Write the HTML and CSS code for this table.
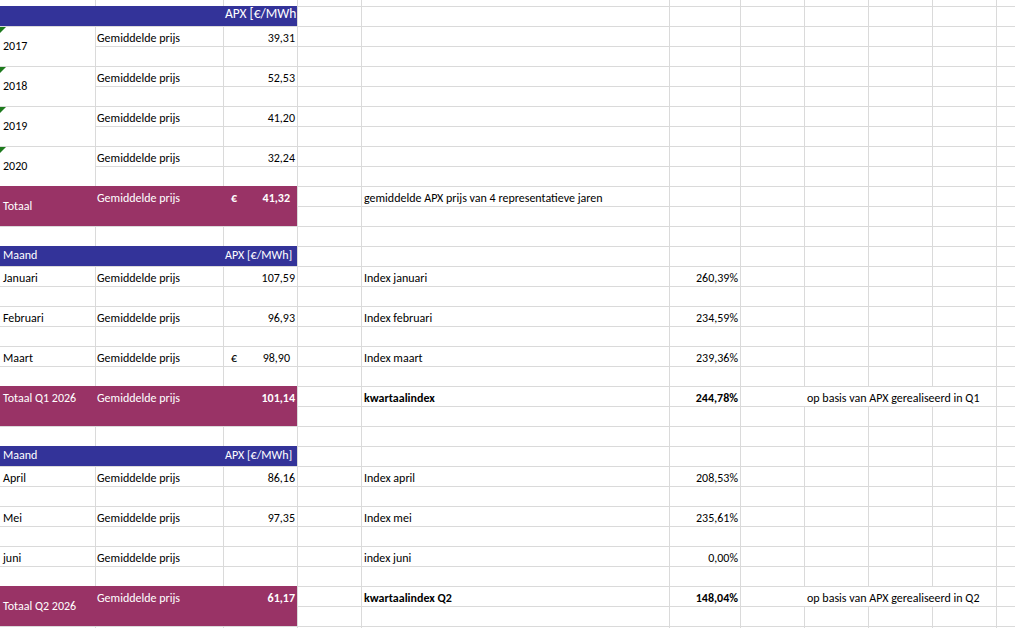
FILE: index.html
```html
<!DOCTYPE html>
<html lang="nl">
<head>
<meta charset="utf-8">
<title>APX prijzen</title>
<link rel="stylesheet" href="styles.css">
</head>
<body>
<div class="sheet">
  <div class="lead"></div>

  <div class="grp">
    <div class="cell ca hdr"></div>
    <div class="cell cb hdr"></div>
    <div class="cell cc hdr big">APX [€/MWh]</div>
  </div>

  <div class="grp two">
    <div class="cell ca tall merged flag">2017</div>
    <div class="cell cb">Gemiddelde prijs</div>
    <div class="cell cc num">39,31</div>
  </div>
  <div class="grp two">
    <div class="cell ca tall merged flag">2018</div>
    <div class="cell cb">Gemiddelde prijs</div>
    <div class="cell cc num">52,53</div>
  </div>
  <div class="grp two">
    <div class="cell ca tall merged flag">2019</div>
    <div class="cell cb">Gemiddelde prijs</div>
    <div class="cell cc num">41,20</div>
  </div>
  <div class="grp two">
    <div class="cell ca tall merged flag">2020</div>
    <div class="cell cb">Gemiddelde prijs</div>
    <div class="cell cc num">32,24</div>
  </div>

  <div class="grp two">
    <div class="cell ca tall tot">Totaal</div>
    <div class="cell cb span tot">Gemiddelde prijs</div>
    <div class="cell cc span tot acct bold"><span>€</span><span>41,32</span></div>
    <div class="cell ce">gemiddelde APX prijs van 4 representatieve jaren</div>
  </div>

  <div class="grp"></div>

  <div class="grp">
    <div class="cell ca hdr">Maand</div>
    <div class="cell cb hdr"></div>
    <div class="cell cc hdr hnum">APX [€/MWh]</div>
  </div>

  <div class="grp two">
    <div class="cell ca">Januari</div>
    <div class="cell cb">Gemiddelde prijs</div>
    <div class="cell cc num">107,59</div>
    <div class="cell ce">Index januari</div>
    <div class="cell cf num">260,39%</div>
  </div>
  <div class="grp two">
    <div class="cell ca">Februari</div>
    <div class="cell cb">Gemiddelde prijs</div>
    <div class="cell cc num">96,93</div>
    <div class="cell ce">Index februari</div>
    <div class="cell cf num">234,59%</div>
  </div>
  <div class="grp two">
    <div class="cell ca">Maart</div>
    <div class="cell cb">Gemiddelde prijs</div>
    <div class="cell cc acct"><span>€</span><span>98,90</span></div>
    <div class="cell ce">Index maart</div>
    <div class="cell cf num">239,36%</div>
  </div>

  <div class="grp two">
    <div class="cell ca span tot">Totaal Q1 2026</div>
    <div class="cell cb span tot">Gemiddelde prijs</div>
    <div class="cell cc span tot num bold">101,14</div>
    <div class="cell ce bold">kwartaalindex</div>
    <div class="cell cf num bold">244,78%</div>
    <div class="cell ch over">op basis van APX gerealiseerd in Q1</div>
  </div>

  <div class="grp"></div>

  <div class="grp">
    <div class="cell ca hdr">Maand</div>
    <div class="cell cb hdr"></div>
    <div class="cell cc hdr hnum">APX [€/MWh]</div>
  </div>

  <div class="grp two">
    <div class="cell ca">April</div>
    <div class="cell cb">Gemiddelde prijs</div>
    <div class="cell cc num">86,16</div>
    <div class="cell ce">Index april</div>
    <div class="cell cf num">208,53%</div>
  </div>
  <div class="grp two">
    <div class="cell ca">Mei</div>
    <div class="cell cb">Gemiddelde prijs</div>
    <div class="cell cc num">97,35</div>
    <div class="cell ce">Index mei</div>
    <div class="cell cf num">235,61%</div>
  </div>
  <div class="grp two">
    <div class="cell ca">juni</div>
    <div class="cell cb">Gemiddelde prijs</div>
    <div class="cell cc num"></div>
    <div class="cell ce">index juni</div>
    <div class="cell cf num">0,00%</div>
  </div>

  <div class="grp two">
    <div class="cell ca tall tot">Totaal Q2 2026</div>
    <div class="cell cb span tot">Gemiddelde prijs</div>
    <div class="cell cc span tot num bold">61,17</div>
    <div class="cell ce bold">kwartaalindex Q2</div>
    <div class="cell cf num bold">148,04%</div>
    <div class="cell ch over">op basis van APX gerealiseerd in Q2</div>
  </div>
</div>
</body>
</html>
```

FILE: styles.css
```css
:root {
  --grid: #dadada;
  --blue: #333399;
  --plum: #993366;
  --cols: 95px 128px 74px 64px 308px 71px 64px 64px 64px 64px 1fr;
}

html, body {
  margin: 0;
  padding: 0;
  background: #fff;
}

.sheet {
  width: 1015px;
  height: 628px;
  overflow: hidden;
  font-family: Carlito, Calibri, Lato, "Liberation Sans", sans-serif;
  font-size: 12px;
  color: #000;
  background-color: #fff;
  background-image:
    linear-gradient(var(--grid), var(--grid)),
    linear-gradient(var(--grid), var(--grid)),
    linear-gradient(var(--grid), var(--grid)),
    linear-gradient(var(--grid), var(--grid)),
    linear-gradient(var(--grid), var(--grid)),
    repeating-linear-gradient(to right, var(--grid) 0 1px, transparent 1px 64px),
    repeating-linear-gradient(to bottom, var(--grid) 0 1px, transparent 1px 20px);
  background-size:
    1px 100%, 1px 100%, 1px 100%, 1px 100%, 1px 100%,
    276px 100%,
    100% 622px;
  background-position:
    95px 0, 223px 0, 297px 0, 361px 0, 669px 0,
    740px 0,
    0 6px;
  background-repeat: no-repeat;
}

.lead {
  height: 6px;
}

.grp {
  display: grid;
  grid-template-columns: var(--cols);
  grid-template-rows: 20px;
}

.grp.two {
  grid-template-rows: 20px 20px;
}

.cell {
  grid-row: 1;
  line-height: 20px;
  padding: 2px 2px 0;
  white-space: nowrap;
  overflow: hidden;
}

.ca { grid-column: 1; padding-left: 3px; }
.cb { grid-column: 2; }
.cc { grid-column: 3; }
.ce { grid-column: 5; padding-left: 3px; }
.cf { grid-column: 6; }
.ch { grid-column: 8 / span 3; padding-left: 3px; }

.tall {
  grid-row: 1 / 3;
  line-height: 40px;
  padding-top: 0;
}

.span {
  grid-row: 1 / 3;
}

.merged {
  background: #fff;
  border-top: 1px solid var(--grid);
  line-height: 38px;
  position: relative;
}

.flag::before {
  content: "";
  position: absolute;
  left: 0;
  top: 0;
  border-style: solid;
  border-width: 6px 6px 0 0;
  border-color: #1d7a1d transparent transparent transparent;
}

.over {
  background: #fff;
  border-top: 1px solid var(--grid);
  padding-top: 1px;
}

.num {
  text-align: right;
  padding-right: 2px;
}

.acct {
  display: flex;
  justify-content: space-between;
  padding-left: 8px;
  padding-right: 7px;
}

.bold {
  font-weight: 700;
}

.hdr {
  background: var(--blue);
  color: #fff;
  line-height: 18px;
  padding-top: 0;
}

.hdr.big {
  font-size: 13.5px;
  line-height: 16px;
}

.hnum {
  text-align: right;
  padding-right: 5px;
}

.tot {
  background: var(--plum);
  color: #fff;
}
```
